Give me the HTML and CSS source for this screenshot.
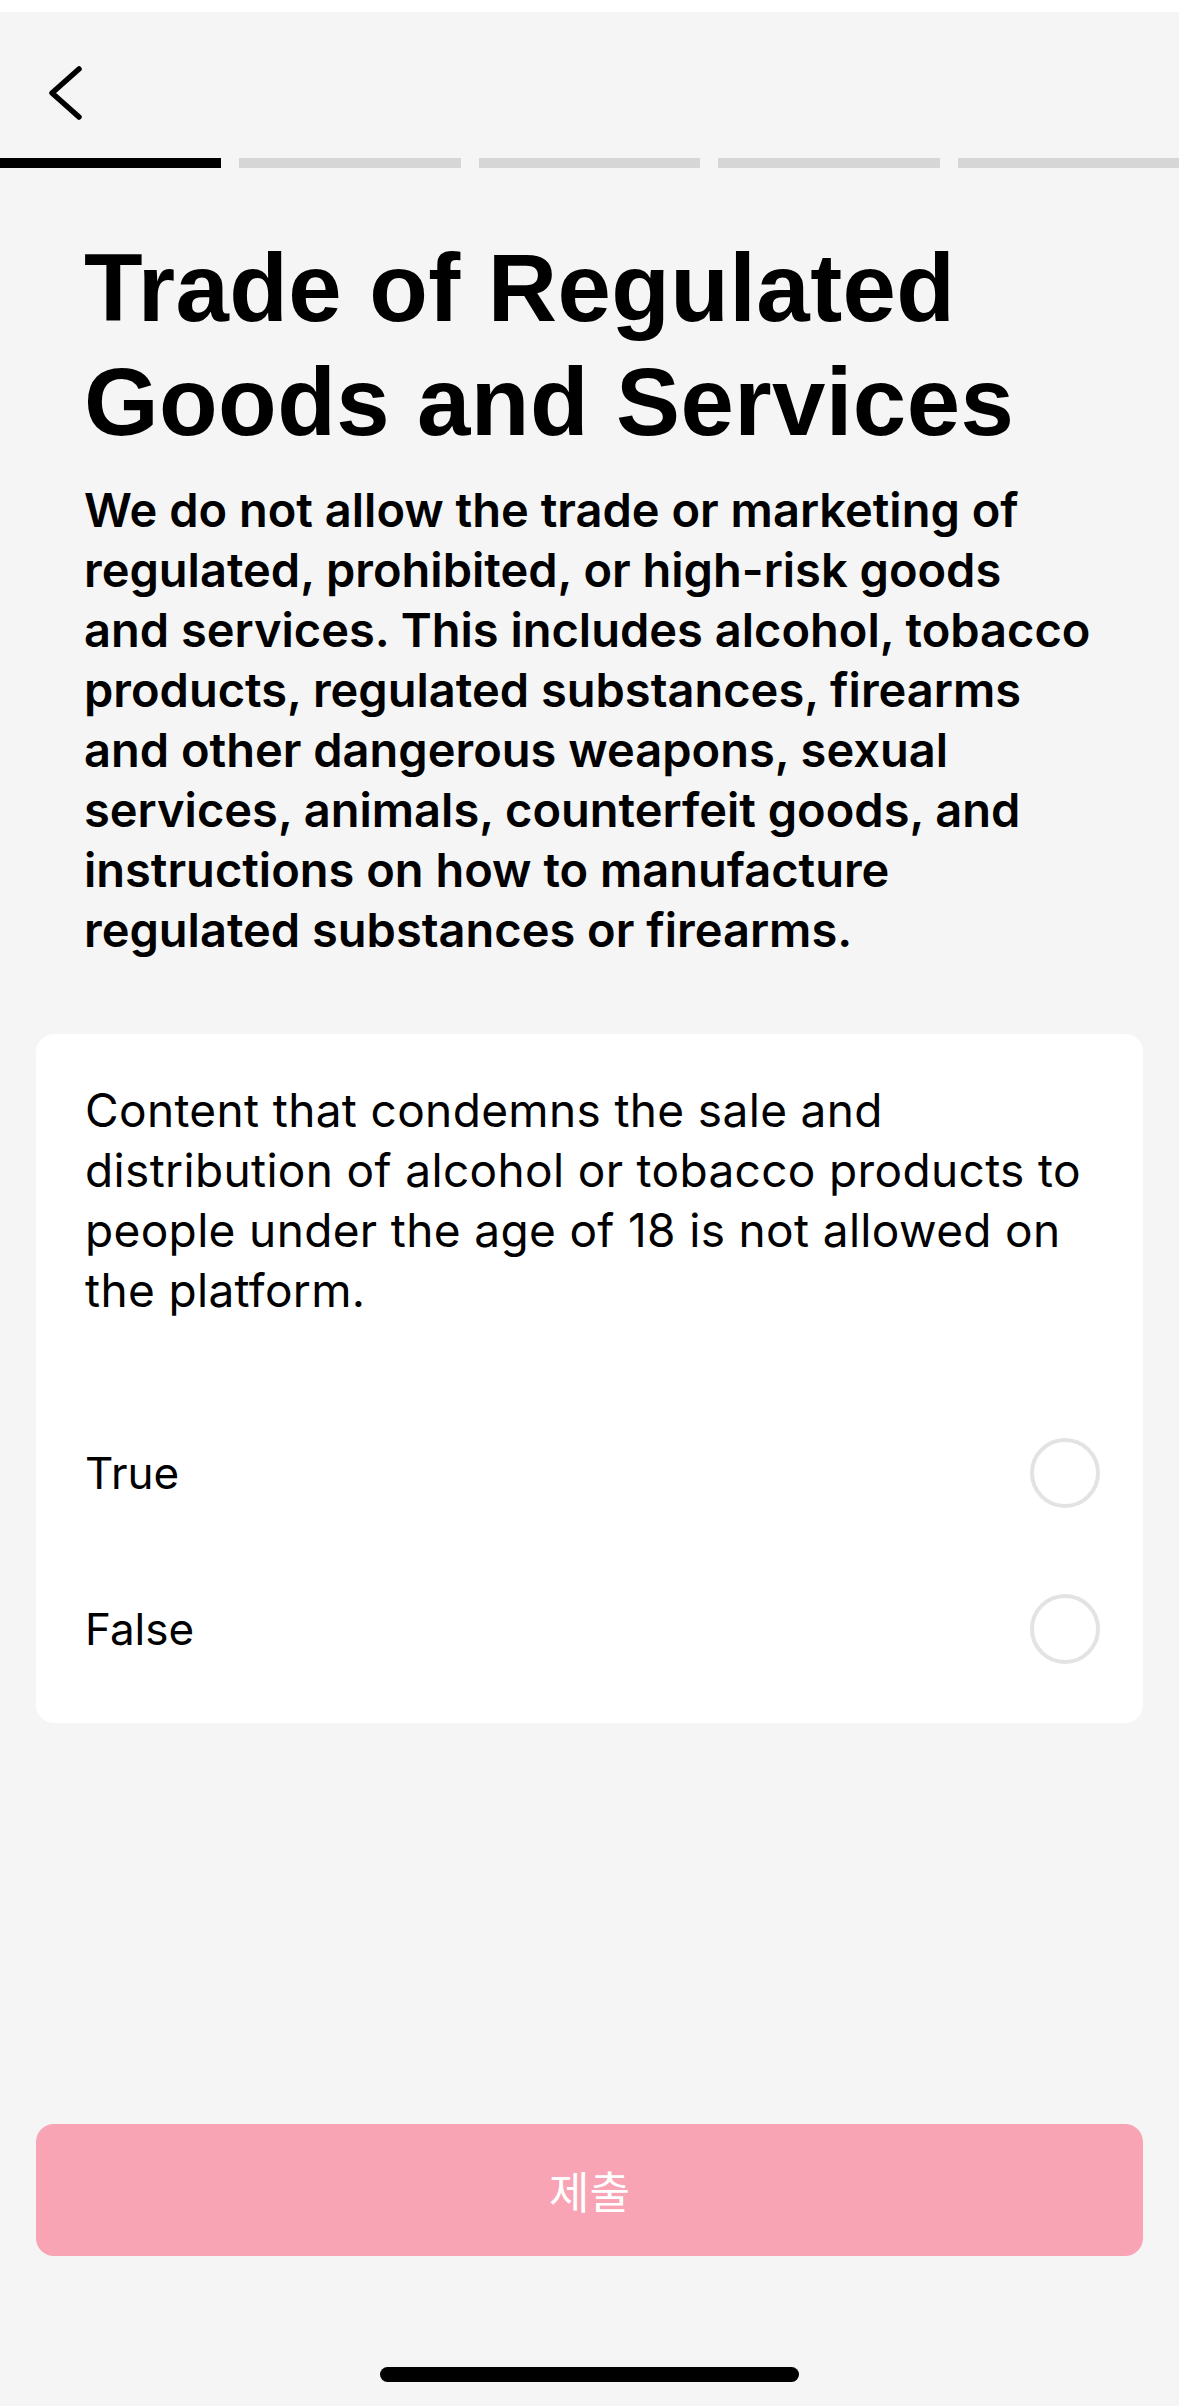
FILE: index.html
```html
<!DOCTYPE html>
<html lang="en">
<head>
<meta charset="utf-8">
<title>Trade of Regulated Goods and Services</title>
<link rel="stylesheet" href="styles.css">
</head>
<body>
<div class="screen">
  <div class="status-strip"></div>
  <header class="topbar">
    <button class="back" aria-label="Back">
      <svg class="back-icon" width="44" height="62" viewBox="0 0 44 62" aria-hidden="true">
        <path d="M35 7 L8 31 L35 55" fill="none" stroke="#000" stroke-width="5.5" stroke-linecap="round" stroke-linejoin="round"/>
      </svg>
    </button>
  </header>
  <div class="progress">
    <span class="seg seg-active"></span>
    <span class="seg"></span>
    <span class="seg"></span>
    <span class="seg"></span>
    <span class="seg"></span>
  </div>
  <main class="intro">
    <h1 class="title">Trade of Regulated<br>Goods and Services</h1>
    <p class="lead">We do not allow the trade or marketing of<br>regulated, prohibited, or high-risk goods<br>and services. This includes alcohol, tobacco<br>products, regulated substances, firearms<br>and other dangerous weapons, sexual<br>services, animals, counterfeit goods, and<br>instructions on how to manufacture<br>regulated substances or firearms.</p>
  </main>
  <section class="card">
    <p class="question">Content that condemns the sale and<br>distribution of alcohol or tobacco products to<br>people under the age of 18 is not allowed on<br>the platform.</p>
    <ul class="options">
      <li class="option"><span class="option-label">True</span><span class="radio"></span></li>
      <li class="option"><span class="option-label">False</span><span class="radio"></span></li>
    </ul>
  </section>
  <div class="spacer"></div>
  <footer class="footer">
    <button class="submit">제출</button>
    <div class="home-indicator"></div>
  </footer>
</div>
</body>
</html>
```
FILE: styles.css
```css
* { box-sizing: border-box; }
html, body { margin: 0; padding: 0; }
body {
  background: #f5f5f5;
  color: #000;
  font-family: "Inter", "Noto Sans", "Liberation Sans", sans-serif;
}
.screen {
  width: 1179px;
  min-height: 2406px;
  display: flex;
  flex-direction: column;
  background: #f5f5f5;
}
.status-strip {
  height: 12px;
  background: #ffffff;
}
.topbar {
  height: 146px;
  display: flex;
  align-items: flex-start;
  padding: 50px 0 0 44px;
}
.back {
  border: 0;
  background: transparent;
  padding: 0;
  margin: 0;
  display: block;
  cursor: pointer;
}
.back-icon { display: block; }
.progress {
  display: flex;
  gap: 18px;
  height: 10px;
}
.seg {
  flex: 1;
  background: #d6d6d6;
}
.seg-active { background: #000; }
.intro {
  padding: 63px 40px 0 84px;
}
.title {
  margin: 0;
  font-family: "Liberation Sans", Arial, sans-serif;
  font-weight: 700;
  font-size: 96px;
  line-height: 114px;
  letter-spacing: 0.4px;
}
.lead {
  margin: 21px 0 0;
  font-weight: 600;
  font-size: 47px;
  line-height: 60px;
}
.card {
  margin: 74px 36px 0;
  background: #ffffff;
  border-radius: 18px;
  padding: 46px 43px 16px 49px;
}
.question {
  margin: 0;
  font-weight: 400;
  font-size: 46px;
  line-height: 60px;
  letter-spacing: 0.35px;
}
.options {
  list-style: none;
  margin: 75px 0 0;
  padding: 0;
}
.option {
  height: 156px;
  display: flex;
  align-items: center;
  justify-content: space-between;
  font-size: 44px;
  line-height: 60px;
}
.radio {
  width: 70px;
  height: 70px;
  border-radius: 50%;
  border: 4px solid #e3e3e3;
}
.spacer { flex: 1; }
.footer {
  display: flex;
  flex-direction: column;
  align-items: center;
  padding: 0 36px 24px;
}
.submit {
  width: 100%;
  height: 132px;
  border: 0;
  border-radius: 18px;
  background: #f8a4b4;
  color: #ffffff;
  font-family: "Inter", "Noto Sans CJK KR", sans-serif;
  font-size: 44px;
  font-weight: 400;
}
.home-indicator {
  margin-top: 111px;
  width: 419px;
  height: 15px;
  border-radius: 8px;
  background: #000;
}
```
